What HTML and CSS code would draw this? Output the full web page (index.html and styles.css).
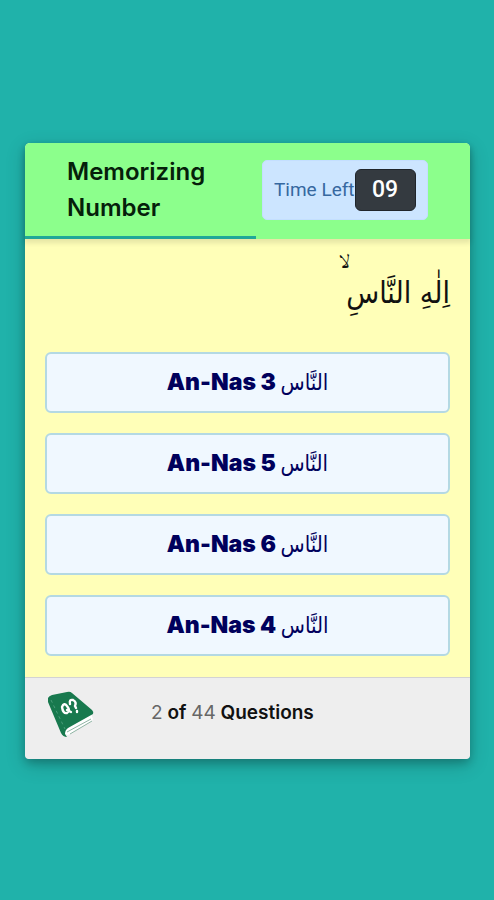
FILE: index.html
```html
<!DOCTYPE html>
<html lang="en">
<head>
<meta charset="utf-8">
<meta name="viewport" content="width=device-width, initial-scale=1">
<title>Memorizing Number</title>
<link rel="stylesheet" href="styles.css">
</head>
<body>
<main class="quiz">
  <header class="quiz-header">
    <h1 class="title">Memorizing Number</h1>
    <div class="timer">
      <span class="timer-label">Time Left</span>
      <span class="timer-value">09</span>
    </div>
    <div class="time-line"></div>
  </header>
  <section class="quiz-body">
    <p class="verse" lang="ar" dir="rtl"><span class="verse-text">اِلٰهِ النَّاسِ<span class="pause-mark">&nbsp;ۙ</span></span></p>
    <div class="options">
      <button class="option" type="button">An-Nas 3 <span class="surah" lang="ar">النَّاس</span></button>
      <button class="option" type="button">An-Nas 5 <span class="surah" lang="ar">النَّاس</span></button>
      <button class="option" type="button">An-Nas 6 <span class="surah" lang="ar">النَّاس</span></button>
      <button class="option" type="button">An-Nas 4 <span class="surah" lang="ar">النَّاس</span></button>
    </div>
  </section>
  <footer class="quiz-footer">
    <svg class="book" viewBox="0 0 48 48" aria-hidden="true">
      <path d="M17 38 44 23 46 28 45 30 21 44 18 43Z" fill="#fff"/>
      <path d="M20 41 44 28M23 43 45 30" fill="none" stroke="#8fb5a4" stroke-width="1"/>
      <path d="M1 7Q2 5 5 4L20 1Q23 0 25 2L45 19Q47 21 46 23L21 37Q18 39 18 43L20 46Q16 46 14 42L1 11Z" fill="#18794e"/>
      <path d="M4 9 18 38" fill="none" stroke="#4a9c79" stroke-width="1" stroke-dasharray="3 3"/>
      <path d="M15 16Q17 11 20 15Q24 20 20 22Q16 23 15 16M20 19 24 21M23 13Q22 8 26 9Q30 11 28 15L29 17M30 20V21" fill="none" stroke="#fff" stroke-width="2.4" stroke-linecap="round"/>
    </svg>
    <p class="progress"><span class="count">2</span> of <span class="count">44</span> Questions</p>
  </footer>
</main>
</body>
</html>
```
FILE: styles.css
```css
* {
  box-sizing: border-box;
  margin: 0;
  padding: 0;
}

body {
  min-height: 100vh;
  display: grid;
  align-items: center;
  padding: 2px 24px 0 25px;
  background: #20b2aa;
  font-family: "Liberation Sans", Arial, sans-serif;
}

.quiz {
  width: 100%;
  max-width: 550px;
  margin: 0 auto;
  border-radius: 5px;
  background: #ffffb8;
  box-shadow: 0 4px 8px rgba(0, 0, 0, .2), 0 6px 20px rgba(0, 0, 0, .19);
}

.quiz-header {
  position: relative;
  display: grid;
  grid-template-columns: 195px auto;
  justify-content: start;
  align-items: center;
  min-height: 96px;
  padding: 0 40px 2px 42px;
  border-radius: 5px 5px 0 0;
  background: #8cff8c;
  box-shadow: 0 3px 5px 1px rgba(0, 0, 0, .1);
}

.title {
  color: #05200a;
  font: 600 24px/36px Inter, sans-serif;
}

.timer {
  display: flex;
  align-items: center;
  height: 60px;
  padding: 0 11px;
  border: 1px solid #c4dfff;
  border-radius: 5px;
  background: #cce5ff;
}

.timer-label {
  color: #36689f;
  font: 400 19px/24px Roboto, sans-serif;
  white-space: nowrap;
}

.timer-value {
  width: 61px;
  border: 1px solid #1f252b;
  border-radius: 6px;
  background: #343a40;
  color: #fff;
  font: 500 23px/40px Roboto, sans-serif;
  text-align: center;
}

.time-line {
  position: absolute;
  left: 0;
  bottom: 0;
  width: 52%;
  height: 3px;
  background: #20a898;
}

.quiz-body {
  padding: 24px 20px 21px;
}

.verse {
  height: 89px;
  color: #111;
  font: 400 30px/60px "DejaVu Sans Condensed", "DejaVu Sans", serif;
}

.verse-text {
  position: relative;
}

.pause-mark {
  position: absolute;
  left: -8px;
  top: -28px;
  font-size: 44px;
}

.options {
  display: grid;
  gap: 20px;
}

.option {
  height: 61px;
  border: 2px solid #b4d9e3;
  border-radius: 6px;
  background: #f0f8ff;
  color: #00005c;
  font: 900 23px/32px Inter, sans-serif;
}

.surah {
  font: 400 22px/32px "DejaVu Sans Condensed", "DejaVu Sans", serif;
}

.quiz-footer {
  display: flex;
  align-items: center;
  gap: 56px;
  height: 82px;
  padding: 0 22px 8px;
  border-top: 1px solid #d3d3d3;
  border-radius: 0 0 4px 4px;
  background: #eee;
}

.book {
  width: 48px;
  height: 48px;
}

.progress {
  padding-bottom: 4px;
  color: #111;
  font: 600 19px/24px Inter, sans-serif;
}

.count {
  color: #666;
  font-weight: 400;
}
```
